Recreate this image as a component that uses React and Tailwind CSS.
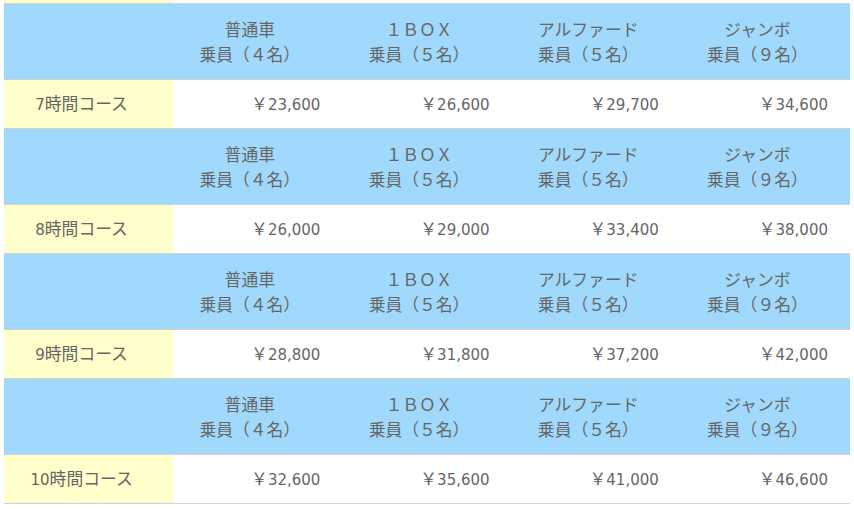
import React from "react";

const groups = [
  { label: "7時間コース", prices: ["￥23,600", "￥26,600", "￥29,700", "￥34,600"] },
  { label: "8時間コース", prices: ["￥26,000", "￥29,000", "￥33,400", "￥38,000"] },
  { label: "9時間コース", prices: ["￥28,800", "￥31,800", "￥37,200", "￥42,000"] },
  { label: "10時間コース", prices: ["￥32,600", "￥35,600", "￥41,000", "￥46,600"] },
];

const cars = [
  ["普通車", "乗員（４名）"],
  ["１ＢＯＸ", "乗員（５名）"],
  ["アルファード", "乗員（５名）"],
  ["ジャンボ", "乗員（９名）"],
];

export default function App() {
  return (
    <div
      className="w-[854px] h-[509px] bg-white overflow-hidden text-[16.8px] text-[#666666]"
      style={{ fontFamily: '"Noto Sans CJK JP", "Noto Sans", sans-serif' }}
    >
      <div className="ml-[4px] w-[846px]">
        <div className="grid grid-cols-5 h-[4px] border-b border-[#d2d2d2]">
          <div className="bg-[#ffffcc]" />
          <div className="col-span-4 bg-white" />
        </div>
        {groups.map((g) => (
          <div key={g.label}>
            <div className="grid grid-cols-5 h-[76px] bg-[#a0d9fb] border-b border-[#d2d2d2]">
              <div />
              {cars.map(([a, b]) => (
                <div
                  key={a}
                  className="flex flex-col items-center justify-center pr-[16px] leading-[25px] text-center"
                >
                  <span>{a}</span>
                  <span>{b}</span>
                </div>
              ))}
            </div>
            <div className="grid grid-cols-5 h-[49px] border-b border-[#d2d2d2]">
              <div className="bg-[#ffffcc] flex items-center justify-center pr-[14px]">
                <span>
                  <span className="text-[15px]" style={{ fontFamily: '"DejaVu Sans", sans-serif' }}>
                    {g.label.replace("時間コース", "")}
                  </span>
                  時間コース
                </span>
              </div>
              {g.prices.map((p, i) => (
                <div key={i} className="bg-white flex items-center justify-end pr-[22px]">
                  <span>
                    ￥
                    <span className="text-[15px]" style={{ fontFamily: '"DejaVu Sans", sans-serif' }}>
                      {p.slice(1)}
                    </span>
                  </span>
                </div>
              ))}
            </div>
          </div>
        ))}
      </div>
    </div>
  );
}
